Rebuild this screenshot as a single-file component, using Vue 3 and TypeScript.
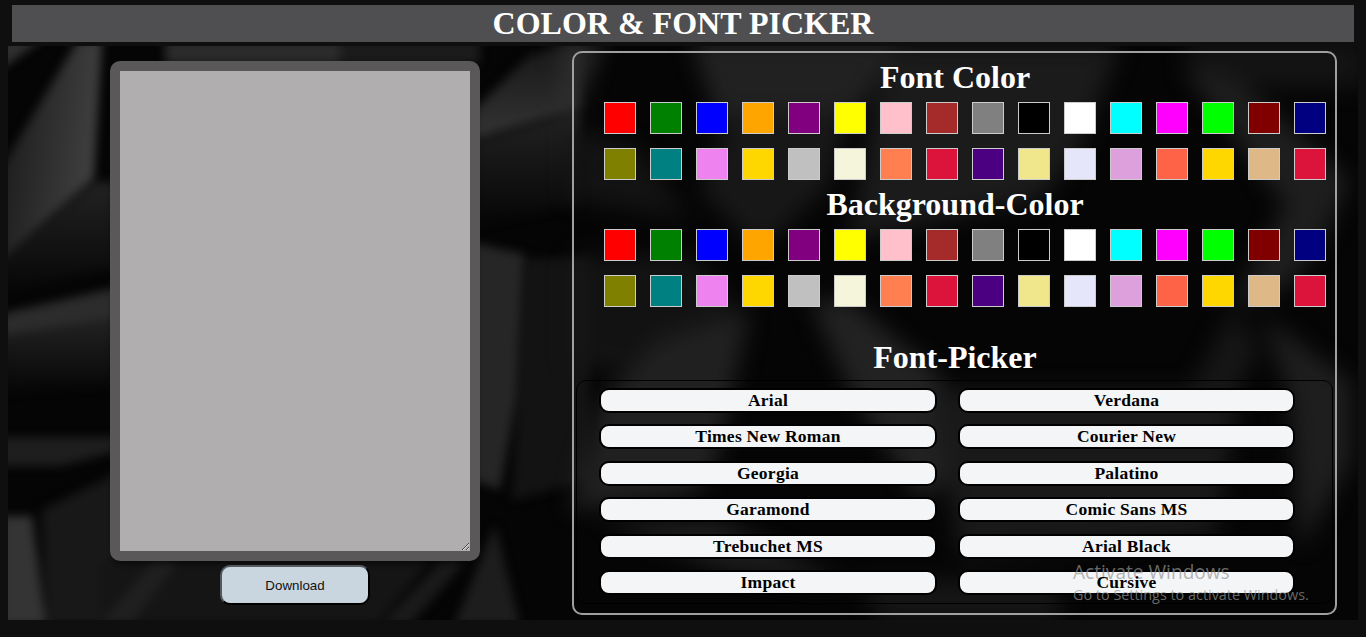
<script setup lang="ts">
import { ref } from 'vue'

const colors: string[] = [
  'red', 'green', 'blue', 'orange', 'purple', 'yellow', 'pink', 'brown',
  'gray', 'black', 'white', 'cyan', 'magenta', 'lime', 'maroon', 'navy',
  'olive', 'teal', 'violet', 'gold', 'silver', 'beige', 'coral', 'crimson',
  'indigo', 'khaki', 'lavender', 'plum', 'tomato', 'gold', 'burlywood', 'crimson',
]

const fonts: string[] = [
  'Arial', 'Verdana', 'Times New Roman', 'Courier New', 'Georgia', 'Palatino',
  'Garamond', 'Comic Sans MS', 'Trebuchet MS', 'Arial Black', 'Impact', 'Cursive',
]

const text = ref('')
const fontColor = ref('black')
const background = ref('#b0aeae')
const family = ref('monospace')
</script>

<template>
  <div class="page">
    <header class="title"><h1>COLOR &amp; FONT PICKER</h1></header>
    <main class="main">
      <svg class="backdrop" viewBox="8 46 1350 574" preserveAspectRatio="none" aria-hidden="true">
        <defs>
          <filter id="soft" x="-5%" y="-5%" width="110%" height="110%" color-interpolation-filters="sRGB"><feGaussianBlur stdDeviation="11" /></filter>
          <filter id="crisp" x="-5%" y="-5%" width="110%" height="110%" color-interpolation-filters="sRGB"><feGaussianBlur stdDeviation="5" /></filter>
          <linearGradient id="facet" x1="0" y1="0" x2="1" y2="0.25">
            <stop offset="0" stop-color="#181818" /><stop offset="1" stop-color="#404040" />
          </linearGradient>
          <linearGradient id="fade" x1="0" y1="0" x2="0" y2="1">
            <stop offset="0" stop-color="#161616" /><stop offset="1" stop-color="#343434" />
          </linearGradient>
          <linearGradient id="drop" x1="0" y1="0" x2="0" y2="1">
            <stop offset="0" stop-color="#222" /><stop offset="1" stop-color="#060606" />
          </linearGradient>
        </defs>
        <rect x="8" y="46" width="1350" height="574" fill="#050505" />
        <g filter="url(#crisp)">
          <path d="M0 40H42L0 70Z" fill="#303030" />
          <path d="M78 40H102L94 178L0 262V170Z" fill="url(#facet)" />
          <path d="M95 182H115V268L0 295V262Z" fill="url(#drop)" />
          <path d="M0 314L115 288V318L0 336Z" fill="#2c2c2c" />
          <path d="M0 336L115 318V385L0 392Z" fill="url(#drop)" />
          <path d="M0 437H115V452L60 466H0Z" fill="#1e1e1e" />
          <path d="M42 510L115 474V625H46Z" fill="#181818" />
          <path d="M0 516H32L46 625H0Z" fill="#343434" />
          <path d="M165 40H340V64H165Z" fill="#2b2b2b" />
          <path d="M340 40H480V64H340Z" fill="#1b1b1b" />
          <path d="M474 110L530 55L580 42V109L474 139Z" fill="url(#fade)" />
          <path d="M474 142L580 112V205L474 225Z" fill="url(#drop)" />
          <path d="M474 243L524 254L516 400L500 490L474 480Z" fill="#262626" />
          <path d="M526 258H590V480L512 500Z" fill="#131313" />
          <path d="M100 562H430L376 625H100Z" fill="#151515" />
          <path d="M152 562H178L130 625H100Z" fill="#1f1f1f" />
          <path d="M440 562H465L410 625H380Z" fill="#1a1a1a" />
          <path d="M495 525L520 625H454Z" fill="#1d1d1d" />
        </g>
        <g filter="url(#soft)" opacity="0.82">
          <path d="M560 40H604L574 115H560Z" fill="#303030" />
          <path d="M570 125L640 148L690 220L570 200Z" fill="#161616" />
          <path d="M690 40H900L860 110L720 125Z" fill="#282828" />
          <path d="M735 110H850L830 185L760 250L700 190Z" fill="#1c1c1c" />
          <path d="M890 46H1120L1080 150L1040 200L850 240L870 130Z" fill="#202020" />
          <path d="M1180 40H1365V88H1210Z" fill="#171717" />
          <path d="M1180 65L1235 80L1300 135L1350 180L1325 235L1290 285L1230 310L1285 205Z" fill="#242424" />
          <path d="M570 255H690L740 310L710 370H570Z" fill="#161616" />
          <path d="M660 340L750 310L715 470L690 495L570 510L600 400Z" fill="#272727" />
          <path d="M810 300L850 300L940 375L975 460L920 500L850 390Z" fill="#292929" />
          <path d="M930 390H1240L1215 535L960 555Z" fill="#1e1e1e" />
          <path d="M600 520H720L850 585L720 570Z" fill="#222" />
          <path d="M1262 315L1352 382V460L1300 550L1290 400Z" fill="#242424" />
          <path d="M1232 310L1260 350L1225 410L1190 390Z" fill="#1a1a1a" />
          <path d="M860 580H1060V620H880Z" fill="#1a1a1a" />
        </g>
      </svg>

      <section class="editor">
        <textarea v-model="text" :style="{ color: fontColor, backgroundColor: background, fontFamily: family }"></textarea>
        <button class="download" type="button">Download</button>
      </section>

      <section class="panel">
        <h1>Font Color</h1>
        <div class="swatches">
          <div v-for="(c, i) in colors" :key="i" class="swatch" :style="{ backgroundColor: c }" @click="fontColor = c"></div>
        </div>
        <h1 class="second">Background-Color</h1>
        <div class="swatches">
          <div v-for="(c, i) in colors" :key="i" class="swatch" :style="{ backgroundColor: c }" @click="background = c"></div>
        </div>
        <h1 class="third">Font-Picker</h1>
        <div class="fonts">
          <div v-for="f in fonts" :key="f" class="font" @click="family = f"><span>{{ f }}</span></div>
        </div>
      </section>
    </main>
    <aside class="activation">
      <div class="line-one">Activate Windows</div>
      <div class="line-two">Go to Settings to activate Windows.</div>
    </aside>
  </div>
</template>

<style>
body {
  margin: 0;
  background: #0f0f0f;
  overflow: hidden;
}
</style>

<style scoped>
.page {
  position: relative;
  box-sizing: border-box;
  width: 1366px;
  height: 637px;
  padding: 5px 8px 0;
  background: #0f0f0f;
  font-family: "Liberation Serif", "Times New Roman", serif;
}
h1 {
  margin: 0;
  font-size: 32px;
  line-height: 37px;
  font-weight: bold;
  text-align: center;
  color: #fff;
}
.title {
  margin: 0 4px 4px;
  height: 37px;
  background: #4f4f51;
}
.main {
  display: flex;
  position: relative;
  height: 574px;
}
.backdrop {
  position: absolute;
  inset: 0;
  width: 100%;
  height: 100%;
}
.editor {
  position: relative;
  box-sizing: border-box;
  width: 564px;
  padding: 15px 0 0 102px;
}
textarea {
  display: block;
  box-sizing: border-box;
  width: 370px;
  height: 500px;
  border: 10px solid #5a5858;
  border-radius: 10px;
  outline: none;
}
.download {
  display: block;
  box-sizing: border-box;
  width: 150px;
  height: 40px;
  margin: 4px 0 0 110px;
  padding: 0;
  border: 2px solid;
  border-color: #56595c #000 #000 #56595c;
  border-radius: 10px;
  background: #c9d5df;
  color: #111;
  font: 13.333px "Liberation Sans", Arial, sans-serif;
}
.panel {
  box-sizing: border-box;
  width: 765px;
  height: 564px;
  margin-top: 5px;
  padding: 6px 2px 0;
  border: 2px solid #a0a0a0;
  border-radius: 10px;
}
.panel,
.font span {
  position: relative;
}
.panel h1 {
  padding-left: 1px;
}
.swatches {
  display: grid;
  grid-template-columns: repeat(16, 32px);
  gap: 14px;
  padding: 6px 0 0 28px;
}
.swatch {
  box-sizing: border-box;
  width: 32px;
  height: 32px;
  border: 1px solid #ccc;
}
.second {
  margin-top: 6px;
}
.third {
  margin-top: 32px;
}
.fonts {
  display: grid;
  box-sizing: border-box;
  grid-template-columns: 338px 337px;
  grid-auto-rows: 25px;
  column-gap: 21px;
  row-gap: 11.4px;
  height: 224px;
  margin-top: 4px;
  padding: 7px 0 0 22px;
  border: 1px solid #000;
  border-radius: 10px;
}
.font {
  box-sizing: border-box;
  border: 2px solid #000;
  border-radius: 10px;
  background: #f3f5f7;
  color: #000;
  font-size: 17.5px;
  font-weight: bold;
  letter-spacing: 0.25px;
  line-height: 21px;
  text-align: center;
}
.font span {
  z-index: 2;
}
.activation {
  position: absolute;
  z-index: 1;
  left: 1073px;
  top: 560px;
  color: rgba(150, 150, 150, 0.7);
  font-family: "Open Sans", "Noto Sans", sans-serif;
  white-space: nowrap;
  pointer-events: none;
}
.line-one {
  font-size: 19.1px;
  line-height: 24px;
}
.line-two {
  font-size: 14.4px;
  line-height: 21px;
}
</style>
